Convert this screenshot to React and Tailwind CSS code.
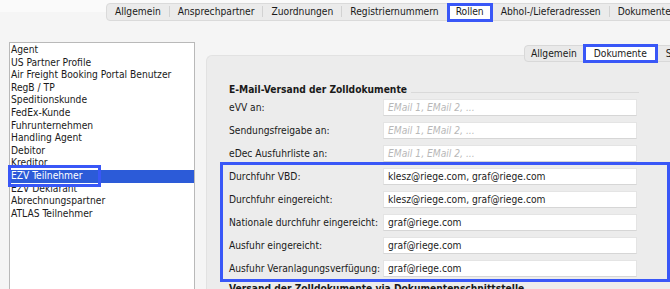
import React from "react";

const topTabs = [
  "Allgemein",
  "Ansprechpartner",
  "Zuordnungen",
  "Registriernummern",
  "Rollen",
  "Abhol-/Lieferadressen",
  "Dokumente",
];

const roles = [
  "Agent",
  "US Partner Profile",
  "Air Freight Booking Portal Benutzer",
  "RegB / TP",
  "Speditionskunde",
  "FedEx-Kunde",
  "Fuhrunternehmen",
  "Handling Agent",
  "Debitor",
  "Kreditor",
  "EZV Teilnehmer",
  "EZV Deklarant",
  "Abrechnungspartner",
  "ATLAS Teilnehmer",
];

const rows = [
  { label: "eVV an:", value: "" },
  { label: "Sendungsfreigabe an:", value: "" },
  { label: "eDec Ausfuhrliste an:", value: "" },
  { label: "Durchfuhr VBD:", value: "klesz@riege.com, graf@riege.com" },
  { label: "Durchfuhr eingereicht:", value: "klesz@riege.com, graf@riege.com" },
  { label: "Nationale durchfuhr eingereicht:", value: "graf@riege.com" },
  { label: "Ausfuhr eingereicht:", value: "graf@riege.com" },
  { label: "Ausfuhr Veranlagungsverfügung:", value: "graf@riege.com" },
];

function Field({ value }) {
  return (
    <div className="w-[254px] h-[17px] bg-white border border-[#e4e4e4] border-b-[#d6d6d6] flex items-center px-[4px]">
      {value ? (
        <span className="text-[#1c1c1c]">{value}</span>
      ) : (
        <span className="italic text-[#b8b8b8]">EMail 1, EMail 2, ...</span>
      )}
    </div>
  );
}

export default function App() {
  return (
    <div
      className="relative w-[670px] h-[289px] overflow-hidden bg-[#f5f5f5] text-[10.2px] text-[#1a1a1a]"
      style={{ fontFamily: '"DejaVu Sans Condensed", "DejaVu Sans", sans-serif' }}
    >
      {/* top tabs */}
      <div className="h-[22px] bg-[linear-gradient(#fafafa_0,#fafafa_12px,#f5f5f5_12px)] pl-[106px] pt-[3px]">
        <div className="flex h-[18px] w-max items-center bg-[#ebebeb] border border-[#dadada] rounded-l-[4px]">
          {topTabs.map((t, i) =>
            t === "Rollen" ? (
              <div
                key={t}
                className="h-[19px] -my-[1px] px-[6px] flex items-center bg-white border-[3px] border-[#3957f7]"
              >
                {t}
              </div>
            ) : (
              <div key={t} className="flex items-center">
                {i > 0 && topTabs[i - 1] !== "Rollen" && (
                  <span className="w-px h-[11px] bg-[#d2d2d2]" />
                )}
                <span className="px-[8px]">{t}</span>
              </div>
            )
          )}
        </div>
      </div>

      <div className="flex pt-[20px]">
        {/* role list */}
        <div className="ml-[9px] w-[186px] h-[260px] shrink-0 bg-white border border-[#b9b9b9] pt-[1px]">
          {roles.map((r) => (
            <div
              key={r}
              className={
                "h-[12.6px] leading-[12.6px] pl-[1px] whitespace-nowrap " +
                (r === "EZV Teilnehmer" ? "bg-[#2c5bd8] text-white" : "")
              }
            >
              {r}
            </div>
          ))}
        </div>

        {/* right side */}
        <div className="ml-[11px] pt-[3px] w-[480px] shrink-0">
          <div className="relative z-10 pl-[318px] h-[18px] -mb-[8px]">
            <div className="flex h-[17px] w-max items-center bg-[#e9e9e9] border border-[#d8d8d8] rounded-l-[4px]">
              <span className="px-[6px]">Allgemein</span>
              <div className="h-[19px] -my-[1px] px-[8px] flex items-center bg-white border-[3px] border-[#3957f7]">
                Dokumente
              </div>
              <span className="px-[8px]">Sonstiges</span>
            </div>
          </div>
          <div className="h-[240px] bg-[#ececec] border-t border-l border-[#e2e2e2] rounded-tl-[6px] pl-[22px] pt-[27px]">
            <div className="flex items-center w-[410px] font-bold h-[14px]">
              <span className="whitespace-nowrap">E-Mail-Versand der Zolldokumente</span>
              <span className="flex-1 h-px bg-[#d9d9d9] ml-[4px] mt-[4px]" />
            </div>
            <div className="flex flex-col gap-[6px] mt-[2px]">
              {rows.map((row) => (
                <div key={row.label} className="flex items-center">
                  <span className="w-[154px] shrink-0 whitespace-nowrap">{row.label}</span>
                  <Field value={row.value} />
                </div>
              ))}
            </div>
            <div className="font-bold mt-[4px] whitespace-nowrap">
              Versand der Zolldokumente via Dokumentenschnittstelle
            </div>
          </div>
        </div>
      </div>

      {/* annotation boxes */}
      <div className="absolute left-[8px] top-[165px] w-[93px] h-[22px] border-[3px] border-[#3957f7]" />
      <div className="absolute left-[220px] top-[162px] w-[450px] h-[120px] border-[3px] border-[#3957f7]" />
    </div>
  );
}
